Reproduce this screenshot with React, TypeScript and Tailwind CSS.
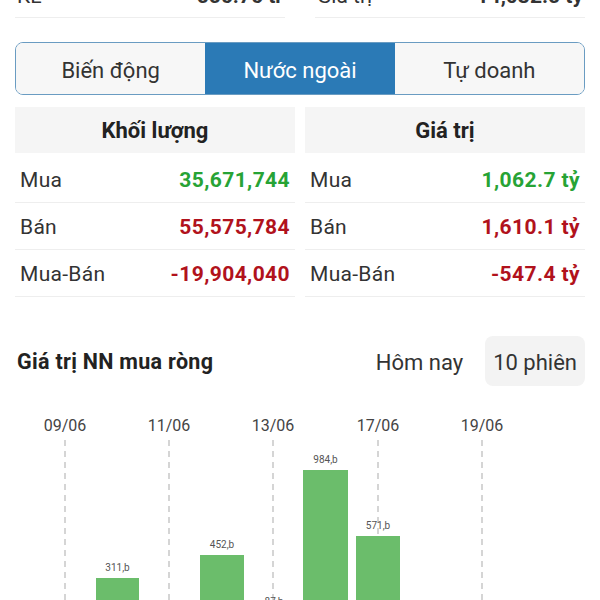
import React from "react";

const rows = [
  { label: "Mua", vol: "35,671,744", val: "1,062.7 tỷ", color: "text-[#27a335]" },
  { label: "Bán", vol: "55,575,784", val: "1,610.1 tỷ", color: "text-[#b1121c]" },
  { label: "Mua-Bán", vol: "-19,904,040", val: "-547.4 tỷ", color: "text-[#b1121c]" },
];

const dates = [
  { x: 65, t: "09/06" },
  { x: 169, t: "11/06" },
  { x: 273, t: "13/06" },
  { x: 378, t: "17/06" },
  { x: 482, t: "19/06" },
];

const bars = [
  { x: 96, w: 43, top: 192, label: "311,b" },
  { x: 200, w: 44, top: 169, label: "452,b" },
  { x: 252, w: 44, top: 226, label: "87,b" },
  { x: 303, w: 45, top: 84, label: "984,b" },
  { x: 356, w: 44, top: 150, label: "571,b" },
];

function Table({ title, field }: { title: string; field: "vol" | "val" }) {
  return (
    <div className="flex-1 flex flex-col">
      <div className="h-[46px] bg-[#f5f5f5] flex items-center justify-center text-[22px] font-bold text-[#222]">
        {title}
      </div>
      <div className="mt-[3px]">
        {rows.map((r) => (
          <div
            key={r.label}
            className="h-[47px] pt-1 flex items-center justify-between px-[5px] border-b border-[#eeeeee]"
          >
            <span className="text-[21px] text-[#333] tracking-[0.3px]">{r.label}</span>
            <span className={`text-[21px] font-bold tracking-[0.4px] ${r.color}`}>{r[field]}</span>
          </div>
        ))}
      </div>
    </div>
  );
}

export default function App() {
  return (
    <div
      className="w-[600px] h-[600px] overflow-hidden bg-white"
      style={{ fontFamily: "Roboto, 'Noto Sans', sans-serif" }}
    >
      {/* top row (cut off at the top edge, as in the reference) */}
      <div className="-mt-4 flex gap-[30px] px-[15px]">
        <div className="flex-1 flex justify-between leading-6 pb-[9px] border-b border-[#eeeeee] text-[21px] text-[#333]">
          <span className="pl-[2px]">KL</span>
          <span className="font-bold pr-[2px]">556.76 tr</span>
        </div>
        <div className="flex-1 flex justify-between leading-6 pb-[9px] border-b border-[#eeeeee] text-[21px] text-[#333]">
          <span className="pl-[2px]">Giá trị</span>
          <span className="font-bold pr-[2px]">14,032.5 tỷ</span>
        </div>
      </div>

      {/* tabs */}
      <div className="mx-[15px] mt-[24px] h-[53px] flex rounded-[8px] border-[1.5px] border-[#6a9cc2] overflow-hidden text-[22px]">
        <div className="flex-1 bg-[#f7f7f7] flex items-center justify-center pt-[3px] text-[#333]">Biến động</div>
        <div className="flex-1 bg-[#2b7ab6] flex items-center justify-center pt-[3px] text-white">Nước ngoài</div>
        <div className="flex-1 bg-[#f7f7f7] flex items-center justify-center pt-[3px] text-[#333]">Tự doanh</div>
      </div>

      {/* tables */}
      <div className="mt-[12px] mx-[15px] flex gap-[10px]">
        <Table title="Khối lượng" field="vol" />
        <Table title="Giá trị" field="val" />
      </div>

      {/* section header */}
      <div className="mt-[39px] h-[50px] flex items-center pl-[17px] pr-[15px]">
        <span className="font-bold text-[21.5px] text-[#222] tracking-[0.3px] pt-[2px]">Giá trị NN mua ròng</span>
        <div className="ml-auto flex items-center gap-[12px]">
          <span className="text-[22px] text-[#333] px-[10px] pt-[2px]">Hôm nay</span>
          <span className="text-[22px] text-[#333] bg-[#f3f3f3] rounded-[8px] h-[50px] px-[8px] pt-[2px] flex items-center">
            10 phiên
          </span>
        </div>
      </div>

      {/* chart */}
      <svg width="600" height="214" className="block">
        {dates.map((d) => (
          <g key={d.t}>
            <text
              x={d.x}
              y={45}
              textAnchor="middle"
              fontSize="16"
              fill="#444"
              fontFamily="Roboto, sans-serif"
            >
              {d.t}
            </text>
            <line x1={d.x} y1={54} x2={d.x} y2={214} stroke="#c8c8c8" strokeWidth="1.5" strokeDasharray="6 5" />
          </g>
        ))}
        {bars.map((b) => (
          <g key={b.label}>
            <rect x={b.x} y={b.top} width={b.w} height={240 - b.top} fill="#6bbd6b" />
            <text
              x={b.x + b.w / 2}
              y={b.top - 7}
              textAnchor="middle"
              fontSize="10"
              fill="#555"
              fontFamily="Roboto, sans-serif"
            >
              {b.label}
            </text>
          </g>
        ))}
      </svg>
    </div>
  );
}
